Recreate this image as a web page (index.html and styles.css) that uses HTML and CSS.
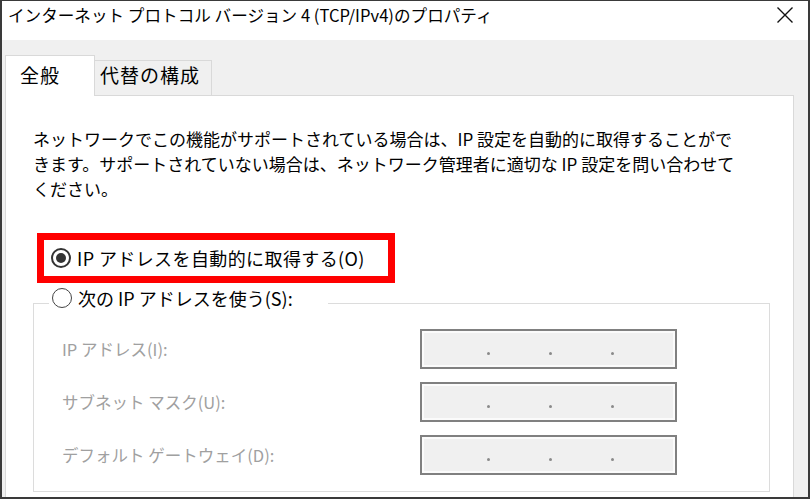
FILE: index.html
```html
<!DOCTYPE html>
<html lang="ja">
<head>
<meta charset="utf-8">
<title>インターネット プロトコル バージョン 4 (TCP/IPv4)のプロパティ</title>
<link rel="stylesheet" href="styles.css">
</head>
<body>
<div class="window">
  <div class="titlebar">
    <span class="title">インターネット プロトコル バージョン 4 (TCP/IPv4)のプロパティ</span>
    <svg class="close" width="18" height="16" viewBox="0 0 18 16" aria-hidden="true">
      <path d="M1.5 0.5 L16.5 15.5 M16.5 0.5 L1.5 15.5" stroke="#111" stroke-width="1.4" fill="none"/>
    </svg>
  </div>
  <div class="tabstrip">
    <div class="tab active">全般</div>
    <div class="tab">代替の構成</div>
  </div>
  <div class="panel">
    <p class="desc">ネットワークでこの機能がサポートされている場合は、IP 設定を自動的に取得することがで<br>きます。サポートされていない場合は、ネットワーク管理者に適切な IP 設定を問い合わせて<br>ください。</p>
    <div class="highlight">
      <div class="option">
        <span class="radio checked"></span>
        <span class="option-label">IP アドレスを自動的に取得する(O)</span>
      </div>
    </div>
    <fieldset class="group">
      <legend class="group-legend">
        <span class="option">
          <span class="radio"></span>
          <span class="option-label">次の IP アドレスを使う(S):</span>
        </span>
      </legend>
      <div class="rows">
        <div class="field-label">IP アドレス(I):</div>
        <div class="ipbox"><span class="dot"></span><span class="dot"></span><span class="dot"></span></div>
        <div class="field-label">サブネット マスク(U):</div>
        <div class="ipbox"><span class="dot"></span><span class="dot"></span><span class="dot"></span></div>
        <div class="field-label">デフォルト ゲートウェイ(D):</div>
        <div class="ipbox"><span class="dot"></span><span class="dot"></span><span class="dot"></span></div>
      </div>
    </fieldset>
  </div>
</div>
</body>
</html>
```
FILE: styles.css
```css
html, body {
  margin: 0;
  padding: 0;
  background: #ffffff;
}
body {
  font-family: "Noto Sans CJK JP", "Noto Sans", sans-serif;
  color: #000;
}
.window {
  width: 810px;
  height: 499px;
  box-sizing: border-box;
  border: 2px solid #3a3a3a;
  border-top-width: 1px;
  background: #f0f0f0;
  display: flex;
  flex-direction: column;
  overflow: hidden;
}
.titlebar {
  height: 39px;
  flex: none;
  background: #fff;
  display: flex;
  justify-content: space-between;
  align-items: flex-start;
  padding: 0 14px 0 6px;
}
.title {
  font-size: 16.6px;
  line-height: 29px;
  white-space: nowrap;
}
.close {
  margin-top: 6px;
}
.tabstrip {
  height: 55px;
  flex: none;
  display: flex;
  align-items: flex-end;
  padding-left: 3px;
}
.tab {
  box-sizing: border-box;
  height: 35px;
  width: 117px;
  border: 1px solid #d9d9d9;
  border-left: none;
  border-bottom: none;
  background: #f0f0f0;
  font-size: 19px;
  line-height: 28px;
  letter-spacing: 1px;
  padding-left: 5px;
  white-space: nowrap;
}
.tab.active {
  position: relative;
  height: 41px;
  width: 90px;
  margin-bottom: -1px;
  border-left: 1px solid #d9d9d9;
  background: #fff;
  padding-top: 5px;
  padding-left: 14px;
}
.panel {
  flex: 1;
  margin-right: 14px;
  margin-left: 3px;
  background: #fff;
  border: 1px solid #d9d9d9;
  border-bottom: none;
  display: flex;
  flex-direction: column;
  align-items: flex-start;
}
.desc {
  margin: 30px 0 0 27px;
  font-size: 17px;
  line-height: 25px;
  white-space: nowrap;
}
.highlight {
  margin: 32px 0 0 31px;
  box-sizing: border-box;
  width: 358px;
  height: 50px;
  border: 7px solid #ff0000;
  display: flex;
  align-items: center;
  padding-left: 7px;
}
.option {
  display: flex;
  align-items: center;
  gap: 6px;
  font-size: 18px;
  line-height: 24px;
  white-space: nowrap;
}
.highlight .option-label {
  letter-spacing: 0.4px;
}
.radio {
  width: 20px;
  height: 20px;
  box-sizing: border-box;
  border: 1.5px solid #444;
  border-radius: 50%;
  display: flex;
  align-items: center;
  justify-content: center;
  flex: none;
}
.radio.checked {
  border: 2px solid #333;
}
.radio.checked::after {
  content: "";
  width: 10px;
  height: 10px;
  border-radius: 50%;
  background: #333;
}
.group {
  margin: 3px 0 0 27px;
  padding: 0;
  width: 737px;
  box-sizing: border-box;
  border: 1px solid #dcdcdc;
  min-inline-size: 0;
}
.group-legend {
  margin-left: 15px;
  padding: 0 0 10px 3px;
  width: 279px;
  box-sizing: border-box;
}
.rows {
  display: grid;
  grid-template-columns: 358px 257px;
  grid-auto-rows: 40px;
  row-gap: 13px;
  align-items: center;
  padding: 9px 0 16px 28px;
}
.field-label {
  color: #a0a0a0;
  font-size: 16.5px;
  line-height: 24px;
  white-space: nowrap;
}
.ipbox {
  height: 40px;
  box-sizing: border-box;
  border: 2px solid #808080;
  box-shadow: inset 0 0 0 2px #fbfbfb;
  background: #f0f0f0;
  display: flex;
  align-items: flex-start;
  gap: 59px;
  padding: 21px 0 0 65px;
}
.dot {
  width: 3px;
  height: 3px;
  border-radius: 50%;
  background: #8a8a8a;
}
```
